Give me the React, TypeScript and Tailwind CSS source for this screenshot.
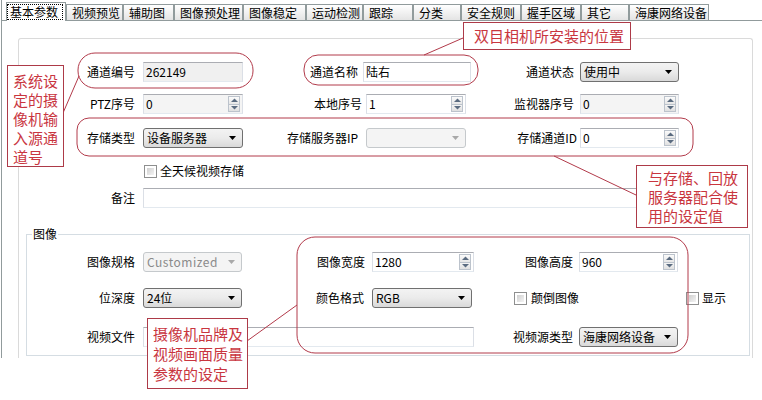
import React from "react";

const tabs = [
  { label: "基本参数", w: "w-[60px]" },
  { label: "视频预览", w: "w-[57px]" },
  { label: "辅助图", w: "w-[51px]" },
  { label: "图像预处理", w: "w-[69px]" },
  { label: "图像稳定", w: "w-[63px]" },
  { label: "运动检测", w: "w-[57px]" },
  { label: "跟踪", w: "w-[50px]" },
  { label: "分类", w: "w-[48px]" },
  { label: "安全规则", w: "w-[60px]" },
  { label: "握手区域", w: "w-[60px]" },
  { label: "其它", w: "w-[48px]" },
  { label: "海康网络设备", w: "w-[80px]" },
];

const Label = ({ text, className }: { text: string; className: string }) => (
  <div className={`text-right text-[12px] leading-[14px] text-black whitespace-nowrap ${className}`}>{text}</div>
);

const TextBox = ({ value = "", className, gray = false }: { value?: string; className: string; gray?: boolean }) => (
  <div
    className={`h-[20px] flex items-center pl-[2px] border border-t-[#abadb3] border-l-[#dbdfe6] border-r-[#dbdfe6] border-b-[#e3e9ef] text-[12px] leading-[14px] ${
      gray ? "bg-[#f0f0f0]" : "bg-white"
    } ${className}`}
  >
    {value}
  </div>
);

const SpinBox = ({ value, className, gray = false }: { value: string; className: string; gray?: boolean }) => (
  <div
    className={`h-[20px] flex items-center pl-[2px] pr-[2px] border border-t-[#abadb3] border-l-[#dbdfe6] border-r-[#dbdfe6] border-b-[#e3e9ef] text-[12px] leading-[14px] ${
      gray ? "bg-[#f4f4f4]" : "bg-white"
    } ${className}`}
  >
    <span className="flex-1">{value}</span>
    <div className="flex flex-col w-[12px] h-[16px]">
      <div className="flex-1 flex items-center justify-center border border-[#bcc3cc] bg-linear-to-b from-[#fbfbfb] to-[#e6e6e6]">
        <svg width="7" height="4" viewBox="0 0 7 4">
          <polygon points="0,4 3.5,0.5 7,4" fill="#5a6b80" />
        </svg>
      </div>
      <div className="flex-1 flex items-center justify-center border border-t-0 border-[#bcc3cc] bg-linear-to-b from-[#f4f4f4] to-[#e0e0e0]">
        <svg width="7" height="4" viewBox="0 0 7 4">
          <polygon points="0,0 7,0 3.5,3.5" fill="#5a6b80" />
        </svg>
      </div>
    </div>
  </div>
);

const Select = ({ value = "", className, disabled = false }: { value?: string; className: string; disabled?: boolean }) => (
  <div
    className={`h-[20px] flex items-center pl-[3px] pr-[6px] rounded-[3px] border text-[12px] leading-[14px] ${
      disabled
        ? "border-[#c5c9cc] bg-[#f4f4f4] text-[#8a8a8a]"
        : "border-[#707070] bg-linear-to-b from-[#f3f3f3] via-[#ebebeb] to-[#d9d9d9] text-black"
    } ${className}`}
  >
    <span className="flex-1 whitespace-nowrap">{value}</span>
    <svg width="7" height="4" viewBox="0 0 7 4">
      <polygon points="0,0 7,0 3.5,4" fill={disabled ? "#a8a8a8" : "#000"} />
    </svg>
  </div>
);

const CheckBox = () => (
  <span className="w-[13px] h-[13px] border border-[#8e8f8f] bg-white p-[2px] flex shrink-0">
    <span className="flex-1 bg-linear-to-br from-[#d0d0d0] to-[#f4f4f4]" />
  </span>
);

const Note = ({ lines, className }: { lines: string[]; className: string }) => (
  <div className={`absolute bg-white border border-[#ad3a48] text-[#c9363f] text-[15px] ${className}`}>
    {lines.map((l) => (
      <div key={l} className="whitespace-nowrap">
        {l}
      </div>
    ))}
  </div>
);

export default function App() {
  return (
    <div className="relative w-[762px] h-[400px] bg-white overflow-hidden font-['Noto_Sans_CJK_SC','Liberation_Sans',sans-serif] text-black">
      <div className="ml-[1px] h-[358px] border-l border-[#919b9c] flex flex-col">
        {/* tab strip */}
        <div className="flex items-end h-[21px] pl-[4px] border-b border-[#919b9c]">
          {tabs.map((t, i) =>
            i === 0 ? (
              <div key={t.label} className={`${t.w} h-[19px] -mb-px bg-white border border-b-0 border-[#919b9c] pt-[1px]`}>
                <div className="w-[56px] h-[16px] border border-dotted border-black pl-[2px] text-[12px] leading-[14px]">
                  {t.label}
                </div>
              </div>
            ) : (
              <div
                key={t.label}
                className={`${t.w} h-[16px] border border-b-0 border-[#919b9c] bg-linear-to-b from-[#ffffff] to-[#e4e4e4] pl-[5px] text-[12px] leading-[15px] whitespace-nowrap`}
              >
                {t.label}
              </div>
            )
          )}
        </div>

        {/* page */}
        <div className="flex-1 flex flex-col">
          <div className="ml-[16px] mt-[17px] w-[735px] flex-1 border border-b-0 border-[#dadada] rounded-t-[3px] flex flex-col">
            {/* row 1 */}
            <div className="mt-[23px] flex items-center h-[20px]">
              <Label text="通道编号" className="w-[124px] pr-[8px]" />
              <TextBox value="262149" gray className="w-[100px]" />
              <Label text="通道名称" className="w-[120px] pr-[5px]" />
              <TextBox value="陆右" className="w-[108px]" />
              <Label text="通道状态" className="w-[109px] pr-[6px]" />
              <Select value="使用中" className="w-[99px]" />
            </div>
            {/* row 2 */}
            <div className="mt-[12px] flex items-center h-[20px]">
              <Label text="PTZ序号" className="w-[124px] pr-[8px]" />
              <SpinBox value="0" gray className="w-[100px]" />
              <Label text="本地序号" className="w-[123px] pr-[4px]" />
              <SpinBox value="1" className="w-[100px]" />
              <Label text="监视器序号" className="w-[114px] pr-[6px]" />
              <SpinBox value="0" gray className="w-[99px]" />
            </div>
            {/* row 3 */}
            <div className="mt-[14px] flex items-center h-[20px]">
              <Label text="存储类型" className="w-[124px] pr-[8px]" />
              <Select value="设备服务器" className="w-[100px]" />
              <Label text="存储服务器IP" className="w-[123px] pr-[8px]" />
              <Select disabled className="w-[100px]" />
              <Label text="存储通道ID" className="w-[114px] pr-[3px]" />
              <SpinBox value="0" className="w-[99px]" />
            </div>
            {/* checkbox */}
            <div className="mt-[16px] h-[14px] flex items-center gap-[3px] pl-[125px] text-[12px] leading-[14px]">
              <CheckBox />
              <span>全天候视频存储</span>
            </div>
            {/* remark */}
            <div className="mt-[10px] flex items-center h-[20px]">
              <Label text="备注" className="w-[124px] pr-[8px]" />
              <TextBox className="w-[605px]" />
            </div>

            {/* image group */}
            <div className="relative mt-[26px] ml-[7px] w-[724px] border border-[#d5dde3] pt-[17px] pb-[8px] flex flex-col">
              <span className="absolute -top-[8px] left-[5px] px-[1px] bg-white text-[12px] leading-[14px]">图像</span>
              <div className="flex items-center h-[20px]">
                <Label text="图像规格" className="w-[116px] pr-[8px]" />
                <Select value="Customized" disabled className="w-[99px] tracking-[0.5px]" />
                <Label text="图像宽度" className="w-[130px] pr-[7px]" />
                <SpinBox value="1280" className="w-[102px]" />
                <Label text="图像高度" className="w-[105px] pr-[6px]" />
                <SpinBox value="960" className="w-[99px]" />
              </div>
              <div className="mt-[16px] flex items-center h-[20px]">
                <Label text="位深度" className="w-[116px] pr-[8px]" />
                <Select value="24位" className="w-[99px]" />
                <Label text="颜色格式" className="w-[130px] pr-[8px]" />
                <Select value="RGB" className="w-[100px]" />
                <div className="w-[214px] pl-[42px] flex items-center gap-[4px] text-[12px] leading-[14px]">
                  <CheckBox />
                  <span>颠倒图像</span>
                </div>
                <div className="flex items-center gap-[3px] text-[12px] leading-[14px]">
                  <CheckBox />
                  <span>显示</span>
                </div>
              </div>
              <div className="mt-[19px] flex items-center h-[20px]">
                <Label text="视频文件" className="w-[116px] pr-[8px]" />
                <TextBox className="w-[331px]" />
                <Label text="视频源类型" className="w-[105px] pr-[6px]" />
                <Select value="海康网络设备" className="w-[99px]" />
              </div>
            </div>
            <div className="flex-1" />
          </div>
        </div>
      </div>

      {/* annotations */}
      <svg className="absolute left-0 top-0 pointer-events-none" width="762" height="400" viewBox="0 0 762 400" fill="none">
        <g stroke="#b23a4a" strokeWidth="1">
          <rect x="78" y="53" width="175" height="35" rx="17" />
          <rect x="304" y="55" width="174" height="30" rx="14" />
          <rect x="77" y="118" width="616" height="38" rx="12" />
          <rect x="297" y="237" width="391" height="116" rx="18" />
          <line x1="463" y1="38" x2="424" y2="55" />
          <line x1="63" y1="113" x2="79" y2="76" />
          <line x1="636" y1="195" x2="554" y2="156" />
          <line x1="247" y1="341" x2="297" y2="305" />
        </g>
      </svg>

      <Note
        lines={["双目相机所安装的位置"]}
        className="left-[463px] top-[22px] w-[168px] h-[28px] leading-[18px] pl-[10px] pt-[4px]"
      />
      <Note
        lines={["系统设", "定的摄", "像机输", "入源通", "道号"]}
        className="left-[7px] top-[65px] w-[57px] h-[102px] leading-[19px] pl-[5px] pt-[5px]"
      />
      <Note
        lines={["与存储、回放", "服务器配合使", "用的设定值"]}
        className="left-[636px] top-[165px] w-[112px] h-[63px] leading-[19px] pl-[11px] pt-[2px]"
      />
      <Note
        lines={["摄像机品牌及", "视频画面质量", "参数的设定"]}
        className="left-[147px] top-[318px] w-[101px] h-[71px] leading-[20px] pl-[5px] pt-[5px]"
      />
    </div>
  );
}
